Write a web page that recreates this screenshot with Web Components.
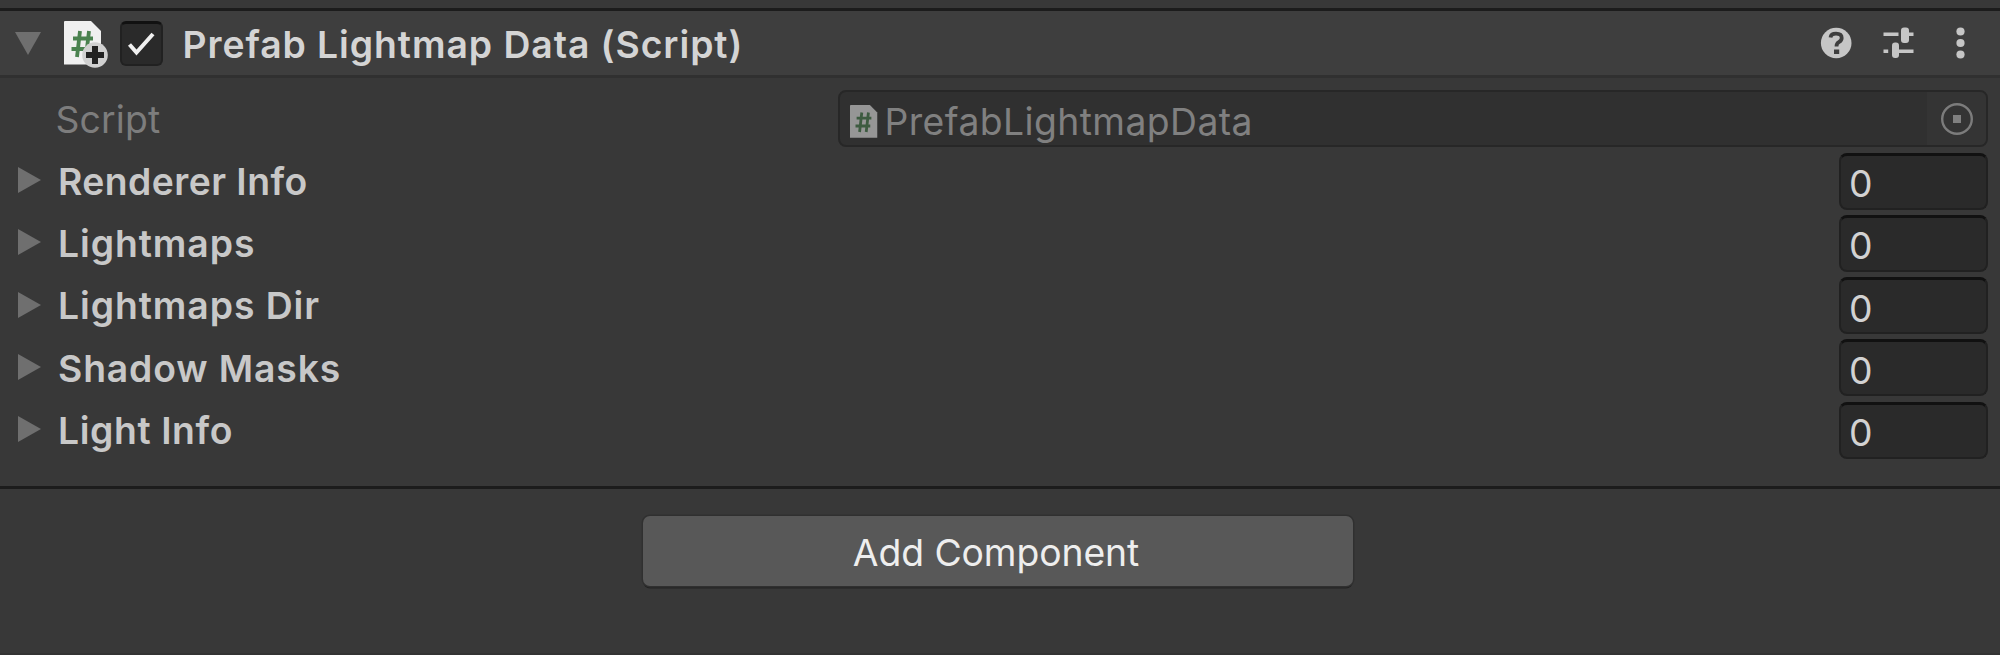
<!DOCTYPE html>
<html lang="en">
<head>
<meta charset="utf-8">
<title>Inspector</title>
<style>
html,body{margin:0;height:100%;background:#383838;overflow:hidden}
body{font:400 37.3px/46px Inter,sans-serif;color:#c8c8c8}
</style>
</head>
<body>
<inspector-panel></inspector-panel>
<script>
const define = (name, html, setup) => customElements.define(name, class extends HTMLElement {
  connectedCallback() {
    if (this.shadowRoot) return;
    this.attachShadow({mode: 'open'}).innerHTML = html;
    if (setup) setup(this, this.shadowRoot);
  }
});

define('script-icon', `
<style>:host{display:block;flex:none} svg{display:block;width:100%;height:100%}</style>
<svg viewBox="0 0 38 44" preserveAspectRatio="none">
  <path d="M1 0H27L37 10V43.500H0V1Q0 0 1 0Z" fill="#f0f0f0"/>
  <path d="M16 10L13 36M25 10L22 36M9 17.500H29M7.500 28H27.500" stroke="#4a824f" stroke-width="3.800" fill="none"/>
</svg>`);

define('fold-arrow', `
<style>:host{display:block;flex:none;width:26px;height:26px} svg{display:block;width:100%;height:100%}</style>
<svg viewBox="0 0 26 26"><path fill="#6f6f6f"/></svg>`, (el, root) =>
  root.querySelector('path').setAttribute('d', el.hasAttribute('open') ? 'M0 2H26L13 25Z' : 'M3 0V26L26 13Z'));

define('check-box', `
<style>:host{display:block;flex:none;box-sizing:border-box;width:43px;height:45px;border:2px solid #212121;border-top:3px solid #111;border-radius:6px;background:#2a2a2a}
svg{display:block;width:39px;height:40px}</style>
<svg viewBox="0 0 39 40"><path d="M7.500 20.500L14.500 28.500L31 10" fill="none" stroke="#f0f0f0" stroke-width="4"/></svg>`);

define('header-tools', `
<style>:host{display:block;flex:none;width:150px;height:64px} svg{display:block}</style>
<svg width="150" height="64" viewBox="0 0 150 64" fill="#c6c6c6">
  <circle cx="16.200" cy="32" r="15.300"/>
  <path d="M10.500 26.500Q11 22.700 16 22.700Q21.700 22.700 21.700 27Q21.700 29.500 18.800 31.200Q16.500 32.500 16.500 35.500" fill="none" stroke="#3e3e3e" stroke-width="3.800"/>
  <rect x="14" y="38.500" width="5.200" height="4.500" fill="#3e3e3e"/>
  <path d="M63.500 21.500H78.500V25H63.500ZM88 21.500H93.500V25H88ZM63.500 38.500H68.200V42H63.500ZM78 38.500H93.500V42H78Z"/>
  <rect x="81" y="16.500" width="8" height="15.500" rx="3"/>
  <rect x="72" y="31.500" width="7" height="15.500" rx="3"/>
  <circle cx="140.500" cy="20.500" r="4.100"/><circle cx="140.500" cy="32" r="4.100"/><circle cx="140.500" cy="43.500" r="4.100"/>
</svg>`);

define('component-header', `
<style>
:host{display:flex;align-items:center;box-sizing:border-box;height:70px;padding:0 30px 0 15px;background:#3e3e3e;border-top:3px solid #1c1c1c;border-bottom:3px solid #303030}
.script{position:relative;margin:0 18px 0 23px}
script-icon{width:38px;height:44px}
.plus{position:absolute;left:18px;top:21px}
.title{flex:1;margin-left:19.500px;padding-top:4px;font-weight:600;letter-spacing:.94px;color:#d4d4d4;white-space:nowrap}
</style>
<fold-arrow open></fold-arrow>
<div class="script"><script-icon></script-icon>
<svg class="plus" width="26" height="26" viewBox="0 0 26 26"><circle cx="13" cy="13" r="12.800" fill="#d0d0d0"/><path d="M13 4V22M4 13H22" stroke="#222" stroke-width="6"/></svg></div>
<check-box></check-box>
<div class="title"><slot></slot></div>
<header-tools></header-tools>`);

define('object-field', `
<style>
:host{display:flex;align-items:center;box-sizing:border-box;width:1150px;height:57px;padding-left:10px;border:2px solid #272727;border-radius:8px;background:#303030;color:#808080;overflow:hidden}
script-icon{width:28px;height:33px;margin-top:5px;opacity:.53}
.name{flex:1;margin-left:6.500px;padding-top:6px;letter-spacing:.42px}
.picker{display:flex;align-items:center;justify-content:center;width:59px;height:53px;background:#343434}
</style>
<script-icon></script-icon><div class="name"><slot></slot></div>
<div class="picker"><svg width="34" height="34" viewBox="0 0 34 34"><circle cx="17" cy="17" r="14.800" fill="none" stroke="#7c7c7c" stroke-width="2.400"/><rect x="13" y="13" width="8" height="8" fill="#808080"/></svg></div>`);

define('size-field', `
<style>:host{display:flex;align-items:center;box-sizing:border-box;width:149px;height:57px;padding:5px 0 0 8px;border:2px solid #212121;border-top:3px solid #111;border-radius:8px;background:#2a2a2a;color:#d2d2d2}</style>
<slot></slot>`);

define('property-row', `
<style>
:host{display:flex;align-items:center;height:57px}
.label{flex:1;padding-top:1.600px;font-weight:600;white-space:nowrap}
fold-arrow{margin:-2px 17px 0 15px}
:host([disabled]) .label{font-weight:400;color:#7d7d7d;padding-left:55.500px}
:host([disabled]) fold-arrow{display:none}
</style>
<fold-arrow></fold-arrow><div class="label"><slot></slot></div><slot name="field"></slot>`, (el, root) =>
  root.querySelector('.label').style.letterSpacing = el.getAttribute('spacing') + 'px');

define('add-button', `
<style>:host{display:flex;align-items:center;justify-content:center;width:710px;height:70px;border-radius:7px;background:#585858;color:#eee;letter-spacing:-.08px;box-shadow:0 0 0 1.500px #303030,0 2.500px 0 0 #232323}
span{padding:3px 4px 0 0}</style>
<span><slot></slot></span>`);

define('inspector-panel', `
<style>
:host{display:flex;flex-direction:column;box-sizing:border-box;height:655px;padding-top:8px;border-bottom:2px solid #333}
.rows{display:flex;flex-direction:column;gap:5.220px;box-sizing:border-box;height:411px;padding:12.450px 12px 0 0;border-bottom:3px solid #1c1c1c}
.footer{display:flex;justify-content:center;padding:27px 4px 0 0}
</style>
<component-header>Prefab Lightmap Data (Script)</component-header>
<div class="rows">
<property-row disabled spacing=".14">Script<object-field slot="field">PrefabLightmapData</object-field></property-row>
<property-row spacing=".45">Renderer Info<size-field slot="field">0</size-field></property-row>
<property-row spacing=".93">Lightmaps<size-field slot="field">0</size-field></property-row>
<property-row spacing=".93">Lightmaps Dir<size-field slot="field">0</size-field></property-row>
<property-row spacing=".87">Shadow Masks<size-field slot="field">0</size-field></property-row>
<property-row spacing=".6">Light Info<size-field slot="field">0</size-field></property-row>
</div>
<div class="footer"><add-button>Add Component</add-button></div>`);
</script>
</body>
</html>
